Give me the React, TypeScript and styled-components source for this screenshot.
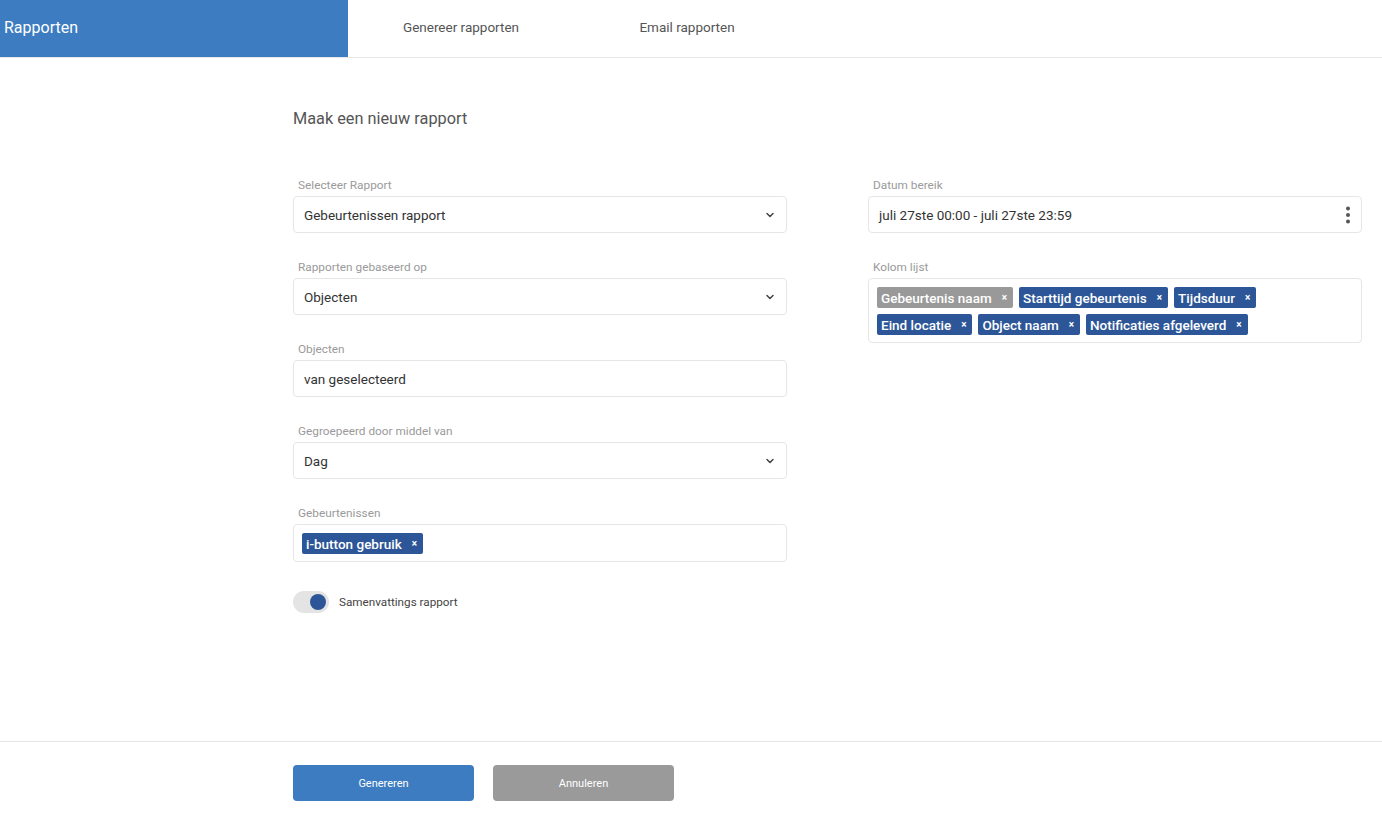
import React from "react";
import styled, { createGlobalStyle } from "styled-components";

const GlobalStyle = createGlobalStyle`
  html, body {
    margin: 0;
    padding: 0;
    background: #ffffff;
    font-family: Roboto, "Liberation Sans", Arial, sans-serif;
  }
  * {
    box-sizing: border-box;
  }
`;

const Page = styled.div`
  width: 100%;
  height: 813px;
  display: flex;
  flex-direction: column;
`;

const Header = styled.div`
  height: 58px;
  display: flex;
  border-bottom: 1px solid #e8e8e8;
`;

const Brand = styled.div`
  width: 348px;
  background: #3d7cc1;
  color: #ffffff;
  font-size: 16px;
  display: flex;
  align-items: center;
  padding-left: 4px;
  padding-bottom: 3px;
`;

const Tab = styled.div`
  width: 226px;
  display: flex;
  align-items: center;
  justify-content: center;
  font-size: 13.5px;
  color: #555555;
  padding-bottom: 3px;
`;

const Main = styled.div`
  flex: 1;
  padding: 51px 0 0 293px;
`;

const Title = styled.h1`
  margin: 0 0 48px;
  font-size: 16.3px;
  font-weight: 400;
  color: #555555;
  line-height: 20px;
`;

const Columns = styled.div`
  display: grid;
  grid-template-columns: 494px 494px;
  column-gap: 81px;
  align-items: start;
`;

const Column = styled.div`
  display: flex;
  flex-direction: column;
  gap: 26px;
`;

const Field = styled.div`
  display: flex;
  flex-direction: column;
`;

const Label = styled.label`
  font-size: 11.8px;
  line-height: 16px;
  color: #9a9a9a;
  padding-left: 5px;
  margin-bottom: 3px;
`;

const Box = styled.div<{ $tall?: boolean }>`
  min-height: 37px;
  border: 1px solid #e6e6e6;
  border-radius: 4px;
  display: flex;
  align-items: center;
  justify-content: space-between;
  padding: ${(p) => (p.$tall ? "8px 8px 7px" : "0 10px")};
  font-size: 13.5px;
  color: #333333;
`;

const TagList = styled.div`
  display: flex;
  flex-wrap: wrap;
  gap: 6px 6px;
`;

const Tag = styled.span<{ $muted?: boolean }>`
  height: 21px;
  display: inline-flex;
  align-items: center;
  gap: 10px;
  padding: 0 6px 0 4px;
  border-radius: 2px;
  background: ${(p) => (p.$muted ? "#999999" : "#2c5697")};
  color: #ffffff;
  font-size: 13.5px;
  font-weight: 500;
`;

const TagClose = styled.span`
  font-size: 10px;
  font-weight: 700;
`;

const ToggleRow = styled.div`
  display: flex;
  align-items: center;
  gap: 10px;
  margin-top: 3px;
  font-size: 11.7px;
  color: #444444;
`;

const Track = styled.div`
  width: 36px;
  height: 22px;
  border-radius: 11px;
  background: #e4e4e4;
  display: flex;
  align-items: center;
  justify-content: flex-end;
  padding-right: 3px;
`;

const Knob = styled.div`
  width: 16px;
  height: 16px;
  border-radius: 50%;
  background: #2c5697;
`;

const Footer = styled.div`
  height: 72px;
  border-top: 1px solid #e6e6e6;
  display: flex;
  gap: 19px;
  padding: 23px 0 0 293px;
`;

const Button = styled.button<{ $variant: "primary" | "secondary" }>`
  width: 181px;
  height: 36px;
  border: none;
  border-radius: 4px;
  background: ${(p) => (p.$variant === "primary" ? "#3d7cc1" : "#9a9a9a")};
  color: #ffffff;
  font-family: inherit;
  font-size: 11px;
`;

const Chevron = () => (
  <svg width="12" height="12" viewBox="0 0 24 24" fill="none" stroke="#444" strokeWidth="3" strokeLinecap="round" strokeLinejoin="round">
    <polyline points="6 9 12 15 18 9" />
  </svg>
);

const Kebab = () => (
  <svg width="6" height="18" viewBox="0 0 6 18" fill="#555">
    <circle cx="3" cy="2.5" r="2" />
    <circle cx="3" cy="9" r="2" />
    <circle cx="3" cy="15.5" r="2" />
  </svg>
);

const columns = [
  { name: "Gebeurtenis naam", muted: true },
  { name: "Starttijd gebeurtenis" },
  { name: "Tijdsduur" },
  { name: "Eind locatie" },
  { name: "Object naam" },
  { name: "Notificaties afgeleverd" },
];

const App = () => {
  return (
    <Page>
      <GlobalStyle />
      <Header>
        <Brand>Rapporten</Brand>
        <Tab>Genereer rapporten</Tab>
        <Tab>Email rapporten</Tab>
      </Header>
      <Main>
        <Title>Maak een nieuw rapport</Title>
        <Columns>
          <Column>
            <Field>
              <Label>Selecteer Rapport</Label>
              <Box>
                Gebeurtenissen rapport
                <Chevron />
              </Box>
            </Field>
            <Field>
              <Label>Rapporten gebaseerd op</Label>
              <Box>
                Objecten
                <Chevron />
              </Box>
            </Field>
            <Field>
              <Label>Objecten</Label>
              <Box>van geselecteerd</Box>
            </Field>
            <Field>
              <Label>Gegroepeerd door middel van</Label>
              <Box>
                Dag
                <Chevron />
              </Box>
            </Field>
            <Field>
              <Label>Gebeurtenissen</Label>
              <Box $tall>
                <TagList>
                  <Tag>
                    i-button gebruik <TagClose>×</TagClose>
                  </Tag>
                </TagList>
              </Box>
            </Field>
            <ToggleRow>
              <Track>
                <Knob />
              </Track>
              Samenvattings rapport
            </ToggleRow>
          </Column>
          <Column>
            <Field>
              <Label>Datum bereik</Label>
              <Box>
                juli 27ste 00:00 - juli 27ste 23:59
                <Kebab />
              </Box>
            </Field>
            <Field>
              <Label>Kolom lijst</Label>
              <Box $tall>
                <TagList>
                  {columns.map((c) => (
                    <Tag key={c.name} $muted={c.muted}>
                      {c.name} <TagClose>×</TagClose>
                    </Tag>
                  ))}
                </TagList>
              </Box>
            </Field>
          </Column>
        </Columns>
      </Main>
      <Footer>
        <Button $variant="primary">Genereren</Button>
        <Button $variant="secondary">Annuleren</Button>
      </Footer>
    </Page>
  );
};

export default App;
